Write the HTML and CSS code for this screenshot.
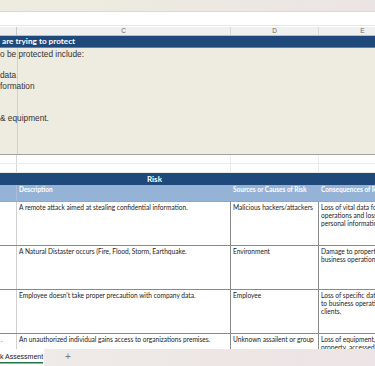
FILE: index.html
```html
<!DOCTYPE html>
<html lang="en">
	<head>
		<meta charset="utf-8" />
		<meta name="viewport" content="width=device-width, initial-scale=1" />
		<title>Risk Assessment</title>
		<link rel="stylesheet" href="styles.css">
	</head>
	<body>
		<header class="ribbon"></header>
		<div class="formula"></div>

		<div class="sheet">
			<div class="row colhead">
				<div class="cell c-b"></div>
				<div class="cell c-c">C</div>
				<div class="cell c-d">D</div>
				<div class="cell c-e">E</div>
			</div>

			<div class="row title">are trying to protect</div>

			<div class="intro">
				<p>o be protected include:</p>
				<p>&nbsp;</p>
				<p>data</p>
				<p>formation</p>
				<p>&nbsp;</p>
				<p>&nbsp;</p>
				<p>&amp; equipment.</p>
			</div>

			<div class="row blank">
				<div class="cell c-b"></div>
				<div class="cell c-c"></div>
				<div class="cell c-d"></div>
				<div class="cell c-e"></div>
			</div>
			<div class="row blank">
				<div class="cell c-b"></div>
				<div class="cell c-c"></div>
				<div class="cell c-d"></div>
				<div class="cell c-e"></div>
			</div>

			<div class="row risk">Risk</div>

			<div class="row subhead">
				<div class="cell c-b"></div>
				<div class="cell c-c">Description</div>
				<div class="cell c-d">Sources or Causes of Risk</div>
				<div class="cell c-e">Consequences of Risk</div>
			</div>

			<div class="row item">
				<div class="cell c-b"></div>
				<div class="cell c-c">A remote attack aimed at stealing confidential information.</div>
				<div class="cell c-d">Malicious hackers/attackers</div>
				<div class="cell c-e">Loss of vital data for<br>operations and loss of<br>personal information</div>
			</div>
			<div class="row item">
				<div class="cell c-b"></div>
				<div class="cell c-c">A Natural Distaster occurs (Fire, Flood, Storm, Earthquake.</div>
				<div class="cell c-d">Environment</div>
				<div class="cell c-e">Damage to property and<br>business operations</div>
			</div>
			<div class="row item">
				<div class="cell c-b"></div>
				<div class="cell c-c">Employee doesn't take proper precaution with company data.</div>
				<div class="cell c-d">Employee</div>
				<div class="cell c-e">Loss of specific data vital<br>to business operations and<br>clients.</div>
			</div>
			<div class="row item">
				<div class="cell c-b">.</div>
				<div class="cell c-c">An unauthorized individual gains access to organizations premises.</div>
				<div class="cell c-d">Unknown assailent or group</div>
				<div class="cell c-e">Loss of equipment, damage to<br>property, accessed premises</div>
			</div>
		</div>

		<footer class="tabs">
			<div class="tab"><span>k Assessment</span></div>
			<div class="add">+</div>
		</footer>
	</body>
</html>
```

FILE: styles.css
```css
:root {
	--dark-blue: #1f487b;
	--light-blue: #95b3d7;
	--beige: #eeebe0;
	--border: #8a8a8a;
}

* {
	margin: 0;
	box-sizing: border-box;
}
html,
body {
	height: 100%;
	overflow: hidden;
}
body {
	width: 375px;
	height: 366px;
	display: flex;
	flex-direction: column;
	font: 6.6px Lato, "Noto Sans", sans-serif;
	color: #1a1a1a;
	background: #fff;
}

.ribbon {
	height: 12px;
	flex: none;
	background: linear-gradient(90deg, #eeecdf, #ece8e2 60%, #ebe4e4);
	border-bottom: 1px solid #dcd8d4;
}
.formula {
	height: 14px;
	flex: none;
	background: #fff;
	border-bottom: 1px solid #e6e6e6;
}

.sheet {
	flex: 1;
	overflow: hidden;
}
.row {
	display: flex;
	width: 420px;
}
.cell {
	flex: none;
	overflow: hidden;
	white-space: nowrap;
}
.c-b {
	width: 17px;
}
.c-c {
	width: 214px;
}
.c-d {
	width: 88px;
}
.c-e {
	width: 101px;
}

.colhead {
	height: 9px;
	margin-top: 1px;
	background: #f0f0f0;
	border-bottom: 1px solid #bdbdbd;
	font: 6.5px "Liberation Sans", sans-serif;
	color: #666;
	line-height: 8px;
}
.colhead .cell {
	text-align: center;
	border-right: 1px solid #dadada;
}
.colhead .c-e {
	width: 88px;
}
.colhead .c-b {
	border-right-color: #c8c8c8;
}

.title {
	height: 12px;
	background: var(--dark-blue);
	color: #fff;
	font-weight: bold;
	font-size: 8.2px;
	line-height: 11px;
	padding-left: 2px;
	border-bottom: 1px solid #6f7f94;
}

.intro {
	height: 107px;
	background: var(--beige);
	font: 8.3px "Liberation Sans", Arial, sans-serif;
	line-height: 10.7px;
	color: #333;
	border-bottom: 1px solid #a3a3a3;
	padding-top: 1px;
	background-image: linear-gradient(90deg, transparent 17px, #d3d0c6 17px, #d3d0c6 18px, transparent 18px);
}
.intro p {
	white-space: nowrap;
}

.blank {
	height: 9px;
	border-bottom: 1px solid #ececec;
}
.blank .cell {
	border-right: 1px solid #ececec;
}
.blank .c-b {
	border-right-color: #d6d6d6;
}

.risk {
	height: 12px;
	background: var(--dark-blue);
	color: #fff;
	font-weight: bold;
	font-size: 8px;
	line-height: 12px;
	padding-left: 147px;
}

.subhead {
	height: 17px;
	background: var(--light-blue);
	color: #fff;
	font-weight: bold;
	font-size: 6.5px;
	line-height: 9px;
	border-bottom: 1px solid #a3a3a3;
}
.subhead .cell {
	padding-left: 2px;
}
.subhead .c-b {
	border-right: 1px solid #aabed8;
}

.item {
	height: 44px;
	border-bottom: 1px solid var(--border);
	line-height: 8.2px;
}
.item .cell {
	padding: 1px 2px 0;
	border-right: 1px solid var(--border);
}
.item .c-b {
	border-right-color: #cfcfcf;
	padding-left: 1px;
	color: #555;
}

.tabs {
	height: 17px;
	flex: none;
	display: flex;
	align-items: stretch;
	background: linear-gradient(90deg, #efece9, #ede6e4 60%, #ece4e6);
	font: 7px "Liberation Sans", sans-serif;
}
.tab {
	width: 44px;
	display: flex;
	background: #fff;
	color: #222;
	line-height: 15px;
	white-space: nowrap;
	overflow: hidden;
	padding-left: 0;
}
.tab span {
	flex: none;
	background-image: linear-gradient(#217346, #217346);
	background-size: 100% 1.5px;
	background-position: 0 12.5px;
	background-repeat: no-repeat;
}
.add {
	margin-left: 21px;
	color: #777;
	font-size: 10px;
	line-height: 15px;
}
```
